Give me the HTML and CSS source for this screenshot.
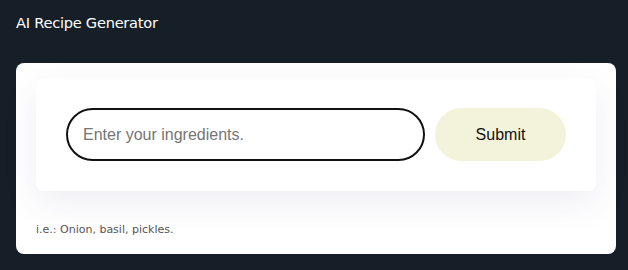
FILE: index.html
```html
<!DOCTYPE html>
<html>
<head>
<meta charset="utf-8">
<link rel="stylesheet" href="styles.css">
</head>
<body>
<header class="top"><h1 class="title">AI Recipe Generator</h1></header>
<main class="card">
  <form class="panel" onsubmit="return false">
    <input class="field" type="text" placeholder="Enter your ingredients.">
    <button class="submit" type="submit">Submit</button>
  </form>
  <p class="hint">i.e.: Onion, basil, pickles.</p>
</main>
</body>
</html>
```
FILE: styles.css
```css
html, body { margin: 0; padding: 0; }
body {
  background: #161f27;
  padding: 0 12px 0 16px;
  height: 270px;
  box-sizing: border-box;
  overflow: hidden;
}
.top { height: 63px; }
.title {
  margin: 0;
  padding-top: 14px;
  font-family: "DejaVu Sans", sans-serif;
  font-size: 14.6px;
  font-weight: normal;
  color: #ffffff;
  letter-spacing: -0.25px;
  line-height: 18px;
}
.card {
  background: #ffffff;
  border-radius: 8px;
  padding: 15px 20px 0 20px;
  height: 191px;
  box-sizing: border-box;
}
.panel {
  display: flex;
  gap: 10px;
  padding: 30px;
  background: #ffffff;
  border-radius: 8px;
  box-shadow: 0 12px 36px rgba(70, 70, 130, 0.09);
}
.field {
  flex: 1;
  height: 53px;
  box-sizing: border-box;
  border: 2px solid #111111;
  border-radius: 27px;
  padding: 0 15px;
  font-family: "Liberation Sans", Arial, sans-serif;
  font-size: 16px;
  outline: none;
}
.field::placeholder { color: #757575; }
.submit {
  width: 131px;
  height: 53px;
  border: none;
  border-radius: 27px;
  background: #f3f3dc;
  font-family: "Liberation Sans", Arial, sans-serif;
  font-size: 16px;
  color: #111111;
}
.hint {
  margin: 32px 0 0 0;
  font-family: "DejaVu Sans", sans-serif;
  font-size: 11px;
  color: #555555;
  line-height: 14px;
}
```
